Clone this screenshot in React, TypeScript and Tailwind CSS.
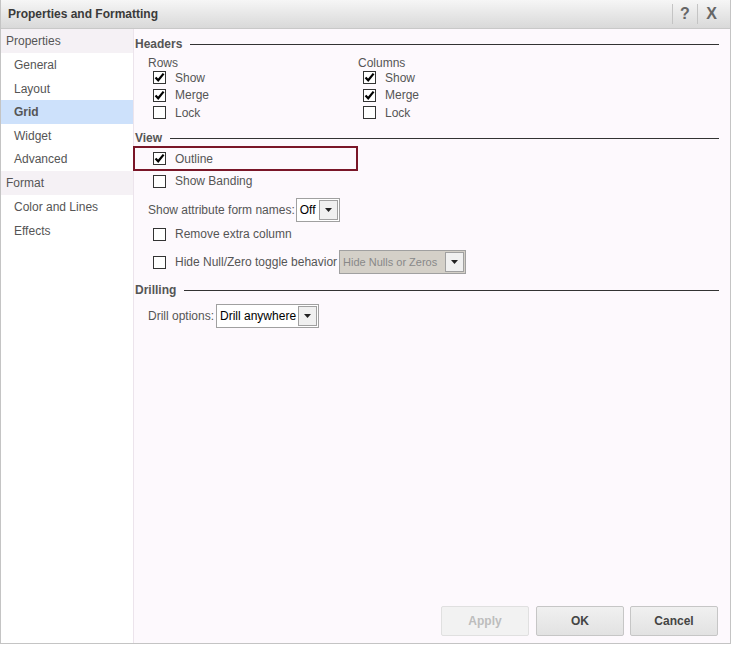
const FONT = { fontFamily: '"Liberation Sans", Arial, sans-serif' }

function Check({ checked }: { checked?: boolean }) {
  return (
    <span className="relative inline-block w-[13px] h-[13px] shrink-0 border border-[#333] bg-white">
      {checked && (
        <svg viewBox="0 0 13 13" className="absolute -left-[1px] -top-[1px] w-[13px] h-[13px]">
          <path d="M2.5 6.5 L5.2 9.3 L10.6 2.6" fill="none" stroke="#000" strokeWidth="2.2" />
        </svg>
      )}
    </span>
  )
}

function CheckRow({ label, checked, h = 'h-[17px]' }: { label: string; checked?: boolean; h?: string }) {
  return (
    <div className={`flex items-center gap-[9px] pl-[5px] ${h}`}>
      <Check checked={checked} />
      <span>{label}</span>
    </div>
  )
}

function Heading({ label }: { label: string }) {
  return (
    <div className="flex items-center h-[16px] gap-[8px] font-bold text-[#555]">
      <span>{label}</span>
      <div className="flex-1 h-px bg-[#333]" />
    </div>
  )
}

function Select({ value, w, disabled }: { value: string; w: string; disabled?: boolean }) {
  return (
    <div className={`flex items-center h-[24px] border border-[#a0a0a0] ${w} ${disabled ? 'bg-[#d4d0c8] text-[#888] text-[11px]' : 'bg-white text-black'}`}>
      <span className="flex-1 pl-[3px] whitespace-nowrap overflow-hidden">{value}</span>
      <span className="w-[19px] h-[20px] mr-[1px] shrink-0 flex items-center justify-center border border-[#a0a0a0] bg-[#f0f0f0]">
        <svg viewBox="0 0 7 4" className="w-[7px] h-[4px]">
          <path d="M0 0 L7 0 L3.5 4 Z" fill="#222" />
        </svg>
      </span>
    </div>
  )
}

const SIDEBAR = [
  { label: 'Properties', group: true, h: 'h-[24px]' },
  { label: 'General', h: 'h-[24px]' },
  { label: 'Layout', h: 'h-[23px]' },
  { label: 'Grid', selected: true, h: 'h-[24px]' },
  { label: 'Widget', h: 'h-[23px]' },
  { label: 'Advanced', h: 'h-[24px]' },
  { label: 'Format', group: true, h: 'h-[24px]' },
  { label: 'Color and Lines', h: 'h-[24px]' },
  { label: 'Effects', h: 'h-[24px]' },
]

export default function App() {
  return (
    <div className="w-[731px] h-[645px] bg-white text-[12px] text-[#555]" style={FONT}>
      <div className="flex flex-col w-[731px] h-[644px] border border-t-0 border-[#c4c4c4]">
        {/* title bar */}
        <div className="flex items-center h-[29px] shrink-0 border-b border-[#c8c8c8] bg-gradient-to-b from-[#f6f6f6] to-[#d9d9d9]">
          <span className="pl-[7px] font-bold text-[#3a3a3a] flex-1">Properties and Formatting</span>
          <div className="flex items-center h-full pr-[5px]">
            <div className="w-px h-[20px] bg-[#c4c4c4]" />
            <span className="w-[24px] text-center text-[16px] font-bold text-[#666]">?</span>
            <div className="w-px h-[20px] bg-[#c4c4c4]" />
            <span className="w-[27px] text-center text-[16px] font-bold text-[#666]">X</span>
          </div>
        </div>

        <div className="flex flex-1 min-h-0">
          {/* sidebar */}
          <div className="w-[133px] shrink-0 bg-white border-r border-[#ece4ec]">
            {SIDEBAR.map((it) => (
              <div
                key={it.label}
                className={`flex items-center ${it.h} ${
                  it.group
                    ? 'pl-[5px] bg-[#f5f1f5]'
                    : it.selected
                    ? 'pl-[13px] bg-[#cde1fb] font-bold'
                    : 'pl-[13px]'
                }`}
              >
                {it.label}
              </div>
            ))}
          </div>

          {/* content */}
          <div className="flex-1 flex flex-col bg-[#fdf9fd] pl-[1px] pr-[11px]">
            <div className="pt-[7px]">
              <Heading label="Headers" />
            </div>
            <div className="flex pl-[13px] mt-[3px]">
              <div className="w-[210px]">
                <div className="h-[14px] leading-[17px]">Rows</div>
                <CheckRow label="Show" checked />
                <CheckRow label="Merge" checked h="h-[18px]" />
                <CheckRow label="Lock" />
              </div>
              <div>
                <div className="h-[14px] leading-[17px]">Columns</div>
                <CheckRow label="Show" checked />
                <CheckRow label="Merge" checked h="h-[18px]" />
                <CheckRow label="Lock" />
              </div>
            </div>

            <div className="mt-[9px]">
              <Heading label="View" />
            </div>
            <div className="-ml-[2px] w-[225px] h-[25px] border-2 border-[#7a1628] flex items-center pl-[18px] gap-[9px]">
              <Check checked />
              <span>Outline</span>
            </div>
            <div className="pl-[13px]">
              <CheckRow label="Show Banding" h="h-[20px]" />
            </div>
            <div className="flex items-center gap-[1px] pl-[13px] mt-[7px]">
              <span>Show attribute form names:</span>
              <Select value="Off" w="w-[44px]" />
            </div>
            <div className="pl-[13px] mt-[1px]">
              <CheckRow label="Remove extra column" h="h-[22px]" />
            </div>
            <div className="flex items-center pl-[18px] mt-[5px]">
              <Check />
              <span className="ml-[9px] mr-[2px]">Hide Null/Zero toggle behavior</span>
              <Select value="Hide Nulls or Zeros" w="w-[127px]" disabled />
            </div>

            <div className="mt-[8px]">
              <Heading label="Drilling" />
            </div>
            <div className="flex items-center gap-[2px] pl-[13px] mt-[6px]">
              <span>Drill options:</span>
              <Select value="Drill anywhere" w="w-[103px]" />
            </div>

            <div className="flex-1" />
            <div className="flex justify-end pb-[7px] pr-[1px]">
              <button className="w-[88px] h-[30px] rounded-[2px] border border-[#e0e0e0] bg-[#f2f2f2] font-bold text-[#bdbdbd]">
                Apply
              </button>
              <button className="ml-[7px] w-[88px] h-[30px] rounded-[2px] border border-[#c6c6c6] bg-gradient-to-b from-[#f0f0f0] to-[#e2e2e2] font-bold text-[#444]">
                OK
              </button>
              <button className="ml-[6px] w-[88px] h-[30px] rounded-[2px] border border-[#c6c6c6] bg-gradient-to-b from-[#f0f0f0] to-[#e2e2e2] font-bold text-[#444]">
                Cancel
              </button>
            </div>
          </div>
        </div>
      </div>
    </div>
  )
}
